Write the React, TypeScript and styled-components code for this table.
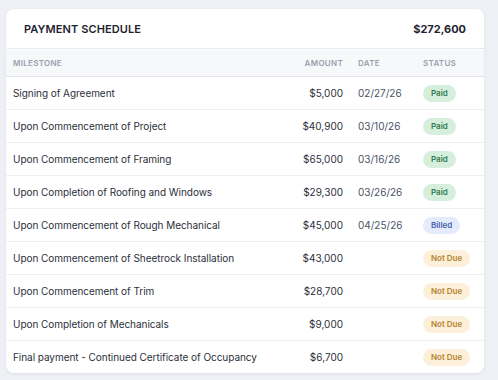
import styled, { createGlobalStyle } from "styled-components";

const GlobalStyle = createGlobalStyle`
  body {
    margin: 0;
    background: #eef0f5;
    font-family: Inter, "Noto Sans", sans-serif;
    color: #2b2f3a;
  }
`;

const Page = styled.div`
  width: 498px;
  height: 380px;
  padding: 9px 14px 0 6px;
  box-sizing: border-box;
`;

const Card = styled.div`
  background: #ffffff;
  border-radius: 8px;
  overflow: hidden;
  box-shadow: 0 1px 3px rgba(30, 40, 70, 0.08);
`;

const Header = styled.div`
  height: 40px;
  display: flex;
  align-items: center;
  justify-content: space-between;
  padding: 1px 18px 0;
  box-sizing: border-box;
  border-bottom: 1px solid #e9ebf0;
  margin-bottom: 1px;
`;

const Title = styled.h2`
  margin: 0;
  font-size: 11px;
  font-weight: 600;
  letter-spacing: 0.1px;
  color: #1f2330;
`;

const Total = styled.div`
  font-size: 11px;
  font-weight: 700;
  color: #1f2330;
`;

const Grid = styled.div`
  display: grid;
  grid-template-columns: 1fr 70px 80px 61px;
`;

const HeadRow = styled(Grid)`
  height: 26px;
  align-items: center;
  background: #f7f8fa;
  border-bottom: 1px solid #e1e4ea;
`;

const HeadCell = styled.div<{ $align?: "left" | "right"; $pad?: number }>`
  font-size: 8px;
  font-weight: 600;
  letter-spacing: 0.3px;
  color: #9aa0ae;
  text-align: ${(p) => p.$align ?? "left"};
  padding-left: ${(p) => p.$pad ?? 0}px;
`;

const Row = styled(Grid)`
  height: 32px;
  align-items: center;
  border-bottom: 1px solid #eef0f3;
  &:last-child {
    border-bottom: none;
  }
`;

const Milestone = styled.div`
  font-size: 10px;
  padding-left: 7px;
  white-space: nowrap;
  letter-spacing: -0.05px;
`;

const Amount = styled.div`
  font-size: 10px;
  text-align: right;
`;

const DateCell = styled.div`
  font-size: 10px;
  color: #4b5367;
  padding-left: 15px;
`;

const StatusCell = styled.div`
  display: flex;
  align-items: center;
`;

const badgeColors = {
  Paid: { bg: "#d6efdd", fg: "#2f7a4d" },
  Billed: { bg: "#e4ecfb", fg: "#4a5fae" },
  "Not Due": { bg: "#fdf0da", fg: "#b5842c" },
};

type Status = keyof typeof badgeColors;

const Badge = styled.span<{ $status: Status }>`
  display: inline-block;
  white-space: nowrap;
  font-size: 8px;
  font-weight: 600;
  line-height: 17px;
  padding: 0 8px;
  border-radius: 9px;
  background: ${(p) => badgeColors[p.$status].bg};
  color: ${(p) => badgeColors[p.$status].fg};
`;

const rows: { name: string; amount: string; date: string; status: Status }[] = [
  { name: "Signing of Agreement", amount: "$5,000", date: "02/27/26", status: "Paid" },
  { name: "Upon Commencement of Project", amount: "$40,900", date: "03/10/26", status: "Paid" },
  { name: "Upon Commencement of Framing", amount: "$65,000", date: "03/16/26", status: "Paid" },
  { name: "Upon Completion of Roofing and Windows", amount: "$29,300", date: "03/26/26", status: "Paid" },
  { name: "Upon Commencement of Rough Mechanical", amount: "$45,000", date: "04/25/26", status: "Billed" },
  { name: "Upon Commencement of Sheetrock Installation", amount: "$43,000", date: "", status: "Not Due" },
  { name: "Upon Commencement of Trim", amount: "$28,700", date: "", status: "Not Due" },
  { name: "Upon Completion of Mechanicals", amount: "$9,000", date: "", status: "Not Due" },
  { name: "Final payment - Continued Certificate of Occupancy", amount: "$6,700", date: "", status: "Not Due" },
];

export default function App() {
  return (
    <Page>
      <GlobalStyle />
      <Card>
        <Header>
          <Title>PAYMENT SCHEDULE</Title>
          <Total>$272,600</Total>
        </Header>
        <HeadRow>
          <HeadCell $pad={7}>MILESTONE</HeadCell>
          <HeadCell $align="right">AMOUNT</HeadCell>
          <HeadCell $pad={15}>DATE</HeadCell>
          <HeadCell>STATUS</HeadCell>
        </HeadRow>
        {rows.map((r) => (
          <Row key={r.name}>
            <Milestone>{r.name}</Milestone>
            <Amount>{r.amount}</Amount>
            <DateCell>{r.date}</DateCell>
            <StatusCell>
              <Badge $status={r.status}>{r.status}</Badge>
            </StatusCell>
          </Row>
        ))}
      </Card>
    </Page>
  );
}
